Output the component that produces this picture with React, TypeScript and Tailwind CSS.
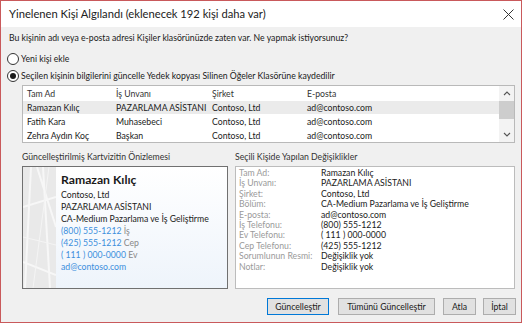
import React from "react";

const rows = [
  { name: "Ramazan Kılıç", title: "PAZARLAMA ASİSTANI", company: "Contoso, Ltd", email: "ad@contoso.com", selected: true },
  { name: "Fatih Kara", title: "Muhasebeci", company: "Contoso, Ltd", email: "ad@contoso.com" },
  { name: "Zehra Aydın Koç", title: "Başkan", company: "Contoso, Ltd", email: "ad@contoso.com" },
];

const changes = [
  ["Tam Ad:", "Ramazan Kılıç"],
  ["İş Unvanı:", "PAZARLAMA ASİSTANI"],
  ["Şirket:", "Contoso, Ltd"],
  ["Bölüm:", "CA-Medium Pazarlama ve İş Geliştirme"],
  ["E-posta:", "ad@contoso.com"],
  ["İş Telefonu:", "(800) 555-1212"],
  ["Ev Telefonu:", "( 111 ) 000-0000"],
  ["Cep Telefonu:", "(425) 555-1212"],
  ["Sorumlunun Resmi:", "Değişiklik yok"],
  ["Notlar:", "Değişiklik yok"],
];

function Radio({ checked, label }: { checked?: boolean; label: string }) {
  return (
    <div className="flex items-center gap-[2px] h-[16px]">
      <span className="w-[12px] h-[12px] rounded-full border border-[#333] bg-white flex items-center justify-center">
        {checked && <span className="w-[6px] h-[6px] rounded-full bg-[#1a1a1a]" />}
      </span>
      <span className="whitespace-nowrap">{label}</span>
    </div>
  );
}

function Btn({ label, primary, className }: { label: string; primary?: boolean; className: string }) {
  return (
    <div
      className={`${className} h-[17px] flex items-center justify-center bg-[#e1e1e1] border ${
        primary ? "border-[#0078d7]" : "border-[#adadad]"
      } text-[8.7px] whitespace-nowrap`}
    >
      {label}
    </div>
  );
}

export default function App() {
  return (
    <div
      className="w-[522px] h-[323px] flex flex-col border border-[#c9595b] bg-[#f0f0f0] text-[#1a1a1a] overflow-hidden"
      style={{ fontFamily: "Lato, 'Noto Sans', sans-serif" }}
    >
      {/* Title bar */}
      <div className="h-[26px] bg-white flex items-center justify-between pl-[8px] pr-[7px] shrink-0">
        <span className="text-[11.2px] text-[#222] whitespace-nowrap">Yinelenen Kişi Algılandı (eklenecek 192 kişi daha var)</span>
        <svg width="11" height="11" viewBox="0 0 11 11">
          <path d="M0.5 0.5 L10.5 10.5 M10.5 0.5 L0.5 10.5" stroke="#333" strokeWidth="1" />
        </svg>
      </div>

      <div className="flex-1 flex flex-col text-[8.7px] pl-[6px] pr-[6px]">
        <div className="mt-[5px] pl-[2px] h-[12px] leading-[12px] whitespace-nowrap">
          Bu kişinin adı veya e-posta adresi Kişiler klasörünüzde zaten var. Ne yapmak istiyorsunuz?
        </div>
        <div className="mt-[7px] flex flex-col gap-[1px]">
          <Radio label="Yeni kişi ekle" />
          <Radio checked label="Seçilen kişinin bilgilerini güncelle Yedek kopyası Silinen Öğeler Klasörüne kaydedilir" />
        </div>

        {/* Contact list */}
        <div className="mt-[1px] ml-[15px] h-[58px] border border-[#b9b9b9] bg-white flex">
          <div className="flex-1 flex flex-col whitespace-nowrap">
            <div className="h-[15px] flex items-center text-[#333]">
              <span className="w-[93px] pl-[4px]">Tam Ad</span>
              <span className="w-[96px]">İş Unvanı</span>
              <span className="w-[95px]">Şirket</span>
              <span>E-posta</span>
            </div>
            {rows.map((r) => (
              <div key={r.name} className={`h-[14px] flex items-center ${r.selected ? "bg-[#ebebeb]" : ""}`}>
                <span className="w-[93px] pl-[4px]">{r.name}</span>
                <span className="w-[96px]">{r.title}</span>
                <span className="w-[95px]">{r.company}</span>
                <span>{r.email}</span>
              </div>
            ))}
          </div>
          <div className="w-[15px] flex flex-col items-center bg-[#f3f3f3]">
            <svg width="8" height="15" viewBox="0 0 8 15" className="shrink-0">
              <path d="M1 9 L4 6 L7 9" stroke="#555" strokeWidth="1.1" fill="none" />
            </svg>
            <div className="w-[15px] h-[18px] bg-[#cdcdcd]" />
            <div className="flex-1" />
            <svg width="8" height="15" viewBox="0 0 8 15" className="shrink-0">
              <path d="M1 6 L4 9 L7 6" stroke="#555" strokeWidth="1.1" fill="none" />
            </svg>
          </div>
        </div>

        {/* Panels */}
        <div className="mt-[8px] ml-[15px] flex gap-[7px]">
          <div className="w-[206px] flex flex-col">
            <div className="h-[15px] leading-[12px] text-[#333] whitespace-nowrap">Güncelleştirilmiş Kartvizitin Önizlemesi</div>
            <div className="h-[123px] border border-[#707070] flex bg-gradient-to-b from-white to-[#eef4fb]">
              <div className="w-[33px] relative overflow-hidden bg-[#e9e9e9]">
                <svg width="33" height="121" viewBox="0 0 33 121" className="absolute inset-0">
                  <path d="M8 0 L2 121 M20 0 L27 121 M0 40 L33 30 M0 95 L33 108 M14 0 L33 60" stroke="#f7f7f7" strokeWidth="2" fill="none" />
                  <path d="M0 70 L33 78 M26 0 L10 121" stroke="#f4f4f4" strokeWidth="1" fill="none" />
                </svg>
              </div>
              <div className="flex-1 pl-[5px] pt-[5px] text-[8.7px] leading-[12px] whitespace-nowrap">
                <div className="text-[12.2px] font-bold leading-[16px] mb-[1px]">Ramazan Kılıç</div>
                <div>Contoso, Ltd</div>
                <div>PAZARLAMA ASİSTANI</div>
                <div>CA-Medium Pazarlama ve İş Geliştirme</div>
                <div>
                  <span className="text-[#3c8fdc]">(800) 555-1212</span> <span className="text-[#888]">İş</span>
                </div>
                <div>
                  <span className="text-[#3c8fdc]">(425) 555-1212</span> <span className="text-[#888]">Cep</span>
                </div>
                <div>
                  <span className="text-[#3c8fdc]">( 111 ) 000-0000</span> <span className="text-[#888]">Ev</span>
                </div>
                <div className="text-[#3c8fdc]">ad@contoso.com</div>
              </div>
            </div>
          </div>

          <div className="flex-1 flex flex-col">
            <div className="h-[15px] leading-[12px] text-[#333] whitespace-nowrap">Seçili Kişide Yapılan Değişiklikler</div>
            <div className="h-[123px] border border-[#bcbcbc] bg-white pl-[3px] pt-[1px] leading-[10.4px] whitespace-nowrap">
              {changes.map(([k, v]) => (
                <div key={k} className="flex">
                  <span className="w-[82px] text-[#9a9a9a]">{k}</span>
                  <span>{v}</span>
                </div>
              ))}
            </div>
          </div>
        </div>

        {/* Buttons */}
        <div className="mt-[9px] flex justify-end mr-[-1px]">
          <Btn primary label="Güncelleştir" className="w-[62px]" />
          <Btn label="Tümünü Güncelleştir" className="w-[97px] ml-[9px]" />
          <Btn label="Atla" className="w-[33px] ml-[8px]" />
          <Btn label="İptal" className="w-[33px] ml-[7px]" />
        </div>
      </div>
    </div>
  );
}
